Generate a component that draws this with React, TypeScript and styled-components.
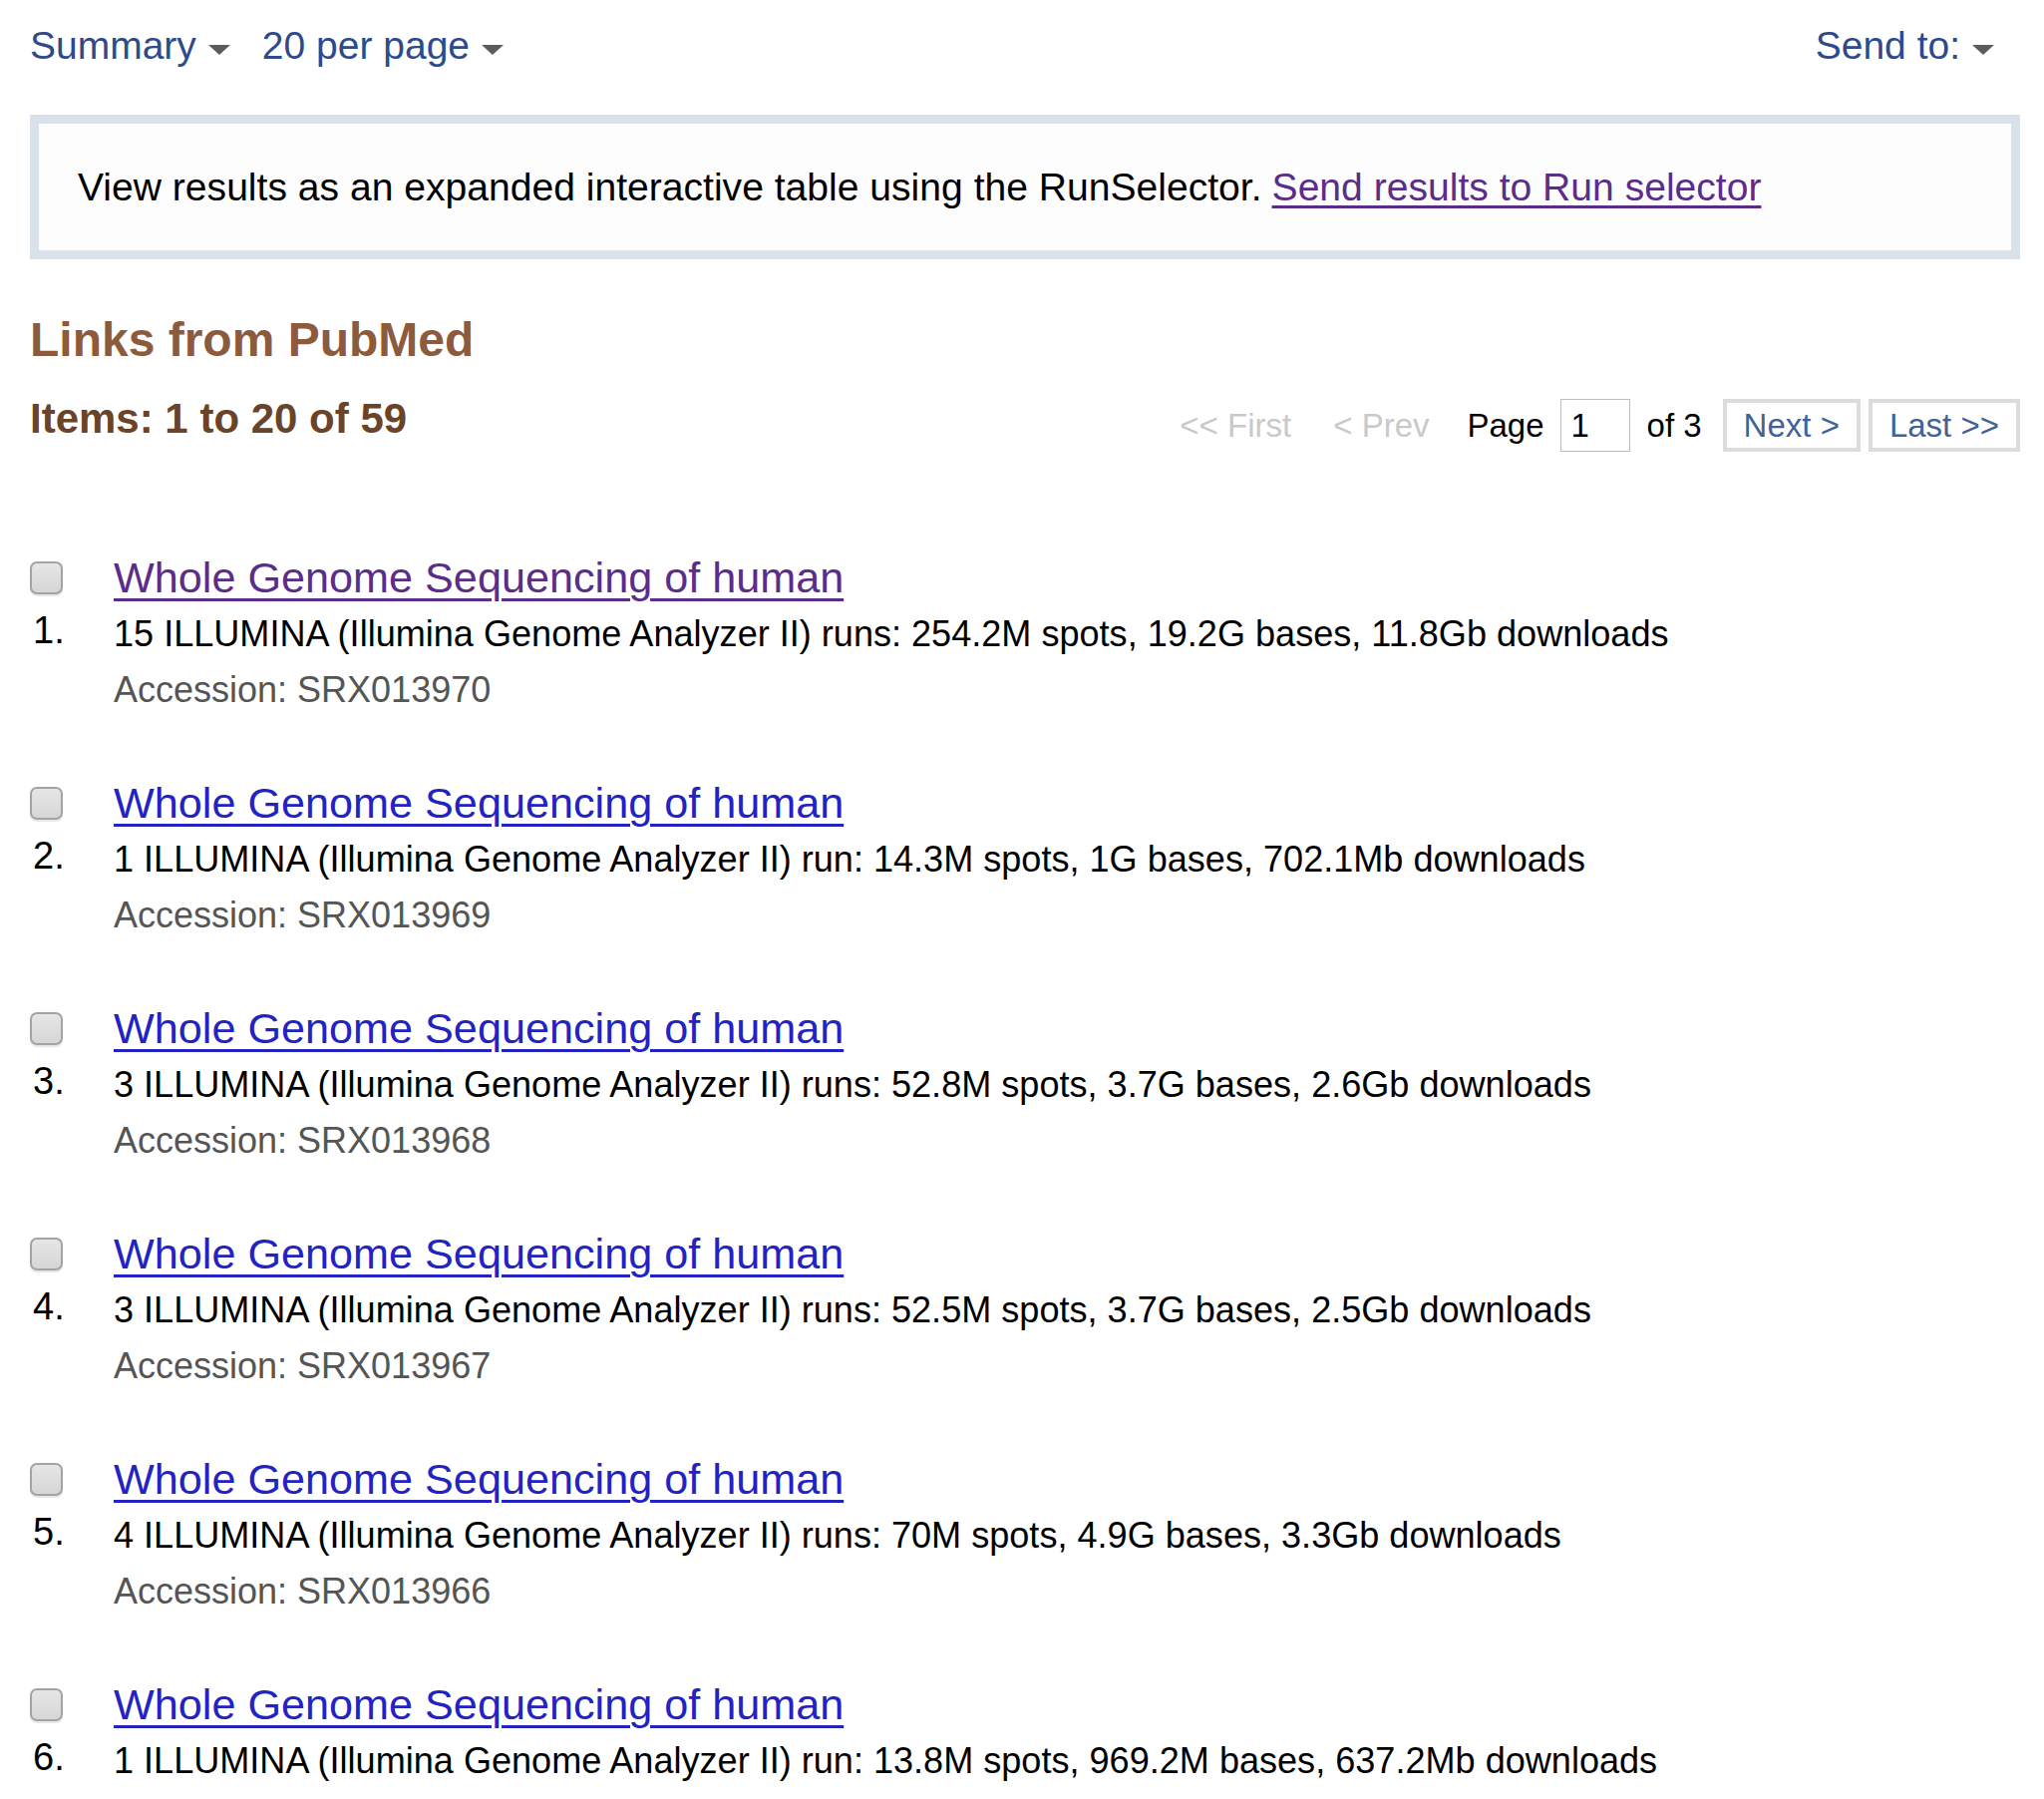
import React from 'react';
import styled, { createGlobalStyle } from 'styled-components';

const GlobalStyle = createGlobalStyle`
  html, body {
    margin: 0;
    padding: 0;
    background: #ffffff;
  }
  body {
    font-family: "Liberation Sans", Arial, Helvetica, sans-serif;
    color: #000;
  }
`;

// Styles
const Page = styled.div`
  padding: 23px 24px 0 30px;
  width: 2050px;
  box-sizing: border-box;
`;

const TopBar = styled.div`
  display: flex;
  justify-content: space-between;
  align-items: center;
  height: 46px;
  font-size: 39px;
  line-height: 46px;
  padding-right: 26px;
`;

const Menus = styled.div`
  display: flex;
  align-items: center;
  gap: 32px;
`;

const Menu = styled.a`
  display: flex;
  align-items: center;
  gap: 12px;
  color: #2f4a8b;
  text-decoration: none;
  cursor: pointer;
`;

const Caret = styled.span`
  display: inline-block;
  width: 0;
  height: 0;
  margin-top: 8px;
  border-left: 11px solid transparent;
  border-right: 11px solid transparent;
  border-top: 10px solid #5c5c5c;
  filter: blur(0.4px);
`;

const Notice = styled.div`
  margin-top: 46px;
  border: 9px solid #d9e1ea;
  background: #fdfdfd;
  height: 145px;
  box-sizing: border-box;
  padding: 0 39px;
  display: flex;
  align-items: center;
  font-size: 39.1px;

  a {
    margin-left: 10px;
    color: #5b2d8a;
    text-decoration: underline;
    text-underline-offset: 5px;
    text-decoration-thickness: 3px;
  }
`;

const Heading = styled.h2`
  margin: 53px 0 26px;
  font-size: 48px;
  line-height: 56px;
  font-weight: bold;
  color: #8c5b3c;
`;

const ListBar = styled.div`
  display: flex;
  justify-content: space-between;
  align-items: flex-start;
`;

const Count = styled.h3`
  margin: 0;
  font-size: 42px;
  line-height: 50px;
  font-weight: bold;
  color: #6a4429;
`;

const Pager = styled.div`
  display: flex;
  align-items: center;
  margin-top: 5px;
  font-size: 33px;
  line-height: 45px;
`;

const PageLink = styled.span<{ $gap: number }>`
  color: #c9c9c9;
  margin-right: ${(p) => p.$gap}px;
`;

const PageText = styled.span<{ $gap: number }>`
  color: #000;
  margin-right: ${(p) => p.$gap}px;
`;

const PageInput = styled.input`
  width: 70px;
  height: 53px;
  box-sizing: border-box;
  border: 1.5px solid #bdbdbd;
  padding: 0 10px;
  font: inherit;
  font-size: 33px;
  color: #000;
  margin-right: 17px;
  outline: none;
`;

const PageButton = styled.a<{ $gap?: number }>`
  display: inline-block;
  height: 53px;
  box-sizing: border-box;
  border: 4px solid #dcdcdc;
  padding: 0 17px;
  line-height: 45px;
  color: #3f6396;
  text-decoration: none;
  margin-right: ${(p) => p.$gap ?? 0}px;
  cursor: pointer;
`;

const Results = styled.div`
  margin-top: 98px;
`;

const Item = styled.div`
  display: grid;
  grid-template-columns: 84px 1fr;
  grid-template-rows: 56px 58px 54px;
  margin-bottom: 58px;
`;

const Check = styled.input`
  appearance: none;
  -webkit-appearance: none;
  margin: 0;
  width: 33px;
  height: 33px;
  box-sizing: border-box;
  border: 2.5px solid #a3a3a3;
  border-radius: 7px;
  background: linear-gradient(#e6e6e6, #d6d6d6);
  box-shadow: 0 1.5px 1px rgba(0, 0, 0, 0.1);
  align-self: center;
`;

const Title = styled.a<{ $visited?: boolean }>`
  font-size: 43.2px;
  line-height: 56px;
  color: ${(p) => (p.$visited ? '#5b2d8a' : '#2323c4')};
  text-decoration: underline;
  text-underline-offset: 6px;
  text-decoration-thickness: 3px;
  justify-self: start;
  cursor: pointer;
`;

const Num = styled.div`
  font-size: 38px;
  line-height: 50px;
  padding-left: 3px;
`;

const Desc = styled.div`
  font-size: 36.1px;
  line-height: 58px;
`;

const Accession = styled.div`
  grid-column: 2;
  font-size: 36px;
  line-height: 54px;
  color: #555555;
`;

const items = [
  {
    desc: '15 ILLUMINA (Illumina Genome Analyzer II) runs: 254.2M spots, 19.2G bases, 11.8Gb downloads',
    acc: 'SRX013970',
    visited: true,
  },
  {
    desc: '1 ILLUMINA (Illumina Genome Analyzer II) run: 14.3M spots, 1G bases, 702.1Mb downloads',
    acc: 'SRX013969',
  },
  {
    desc: '3 ILLUMINA (Illumina Genome Analyzer II) runs: 52.8M spots, 3.7G bases, 2.6Gb downloads',
    acc: 'SRX013968',
  },
  {
    desc: '3 ILLUMINA (Illumina Genome Analyzer II) runs: 52.5M spots, 3.7G bases, 2.5Gb downloads',
    acc: 'SRX013967',
  },
  {
    desc: '4 ILLUMINA (Illumina Genome Analyzer II) runs: 70M spots, 4.9G bases, 3.3Gb downloads',
    acc: 'SRX013966',
  },
  {
    desc: '1 ILLUMINA (Illumina Genome Analyzer II) run: 13.8M spots, 969.2M bases, 637.2Mb downloads',
    acc: 'SRX013965',
  },
];

const App: React.FC = () => {
  return (
    <Page>
      <GlobalStyle />
      <TopBar>
        <Menus>
          <Menu>
            Summary <Caret />
          </Menu>
          <Menu>
            20 per page <Caret />
          </Menu>
        </Menus>
        <Menu>
          Send to: <Caret />
        </Menu>
      </TopBar>

      <Notice>
        View results as an expanded interactive table using the RunSelector.
        <a href="#">Send results to Run selector</a>
      </Notice>

      <Heading>Links from PubMed</Heading>

      <ListBar>
        <Count>Items: 1 to 20 of 59</Count>
        <Pager>
          <PageLink $gap={42}>&lt;&lt; First</PageLink>
          <PageLink $gap={38}>&lt; Prev</PageLink>
          <PageText $gap={16}>Page</PageText>
          <PageInput defaultValue="1" />
          <PageText $gap={21}>of 3</PageText>
          <PageButton $gap={8}>Next &gt;</PageButton>
          <PageButton>Last &gt;&gt;</PageButton>
        </Pager>
      </ListBar>

      <Results>
        {items.map((it, i) => (
          <Item key={it.acc}>
            <Check type="checkbox" />
            <Title $visited={it.visited}>Whole Genome Sequencing of human</Title>
            <Num>{i + 1}.</Num>
            <Desc>{it.desc}</Desc>
            <Accession>Accession: {it.acc}</Accession>
          </Item>
        ))}
      </Results>
    </Page>
  );
};

export default App;
